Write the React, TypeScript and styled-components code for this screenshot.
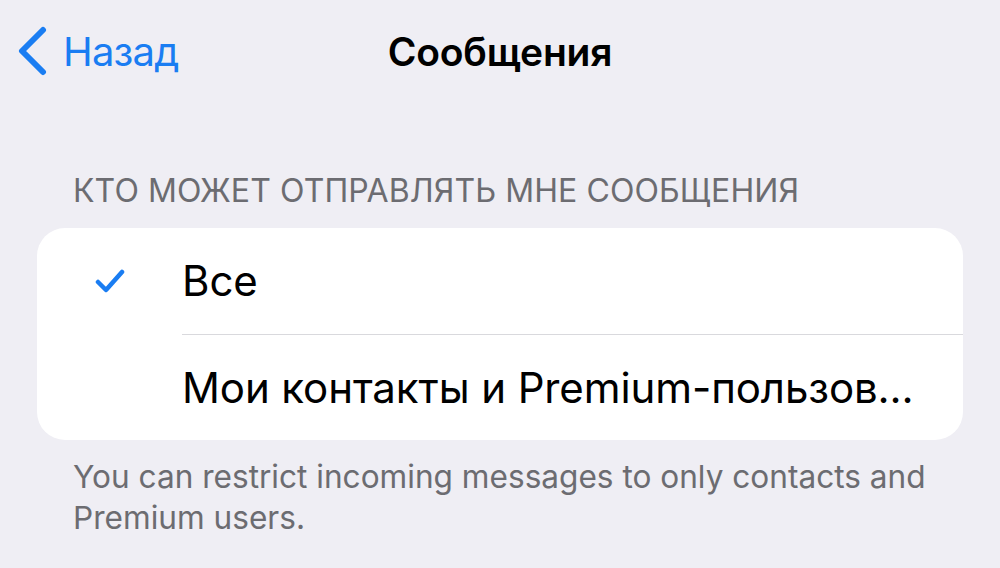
import styled, { createGlobalStyle } from 'styled-components'

const Global = createGlobalStyle`
  html, body {
    margin: 0;
    padding: 0;
    background: #efeef4;
  }
  body {
    font-family: Inter, "Noto Sans", "Liberation Sans", sans-serif;
    -webkit-font-smoothing: antialiased;
  }
`

const Screen = styled.div`
  width: 1000px;
  height: 568px;
  overflow: hidden;
  background: #efeef4;
  display: flex;
  flex-direction: column;
`

const NavBar = styled.header`
  height: 102px;
  display: grid;
  grid-template-columns: 1fr auto 1fr;
  align-items: center;
`

const BackButton = styled.button`
  justify-self: start;
  display: flex;
  align-items: center;
  gap: 16px;
  padding: 0 0 0 17px;
  border: none;
  background: none;
  color: #1a7df2;
  font-family: inherit;
  font-size: 40px;
  letter-spacing: -0.8px;
  cursor: pointer;

  svg {
    display: block;
  }
`

const Title = styled.h1`
  margin: 0;
  font-size: 39px;
  font-weight: 600;
  letter-spacing: -0.2px;
  color: #000;
`

const Section = styled.section`
  padding: 0 37px;
  margin-top: 69px;
`

const SectionHeader = styled.div`
  padding-left: 36px;
  height: 57px;
  font-size: 32px;
  color: #6c6c71;
  letter-spacing: 0.1px;
  text-transform: uppercase;
`

const Card = styled.div`
  background: #fff;
  border-radius: 28px;
  overflow: hidden;
`

const Row = styled.div`
  height: 106px;
  display: flex;
  align-items: center;
`

const CheckCell = styled.div`
  width: 145px;
  display: flex;
  justify-content: center;
`

const RowLabel = styled.div<{ $divider?: boolean }>`
  flex: 1;
  height: 100%;
  display: flex;
  align-items: center;
  font-size: 42px;
  letter-spacing: -0.1px;
  color: #000;
  border-bottom: ${({ $divider }) => ($divider ? '1.5px solid #d9d9dd' : 'none')};
  white-space: nowrap;
  overflow: hidden;
`

const Footer = styled.p`
  margin: 16px 0 0;
  padding: 0 36px;
  font-size: 31.6px;
  line-height: 41px;
  color: #6c6c71;
`

const Chevron = () => (
  <svg width="30" height="50" viewBox="0 0 30 50" fill="none">
    <path d="M26 4 L5 25 L26 46" stroke="#1a7df2" strokeWidth="6" strokeLinecap="round" strokeLinejoin="round" />
  </svg>
)

const Check = () => (
  <svg width="30" height="24" viewBox="0 0 30 24" fill="none">
    <path d="M3 13 L11 21 L27 3" stroke="#1a7df2" strokeWidth="4.5" strokeLinecap="round" strokeLinejoin="round" />
  </svg>
)

const options = [
  { label: 'Все', selected: true },
  { label: 'Мои контакты и Premium-пользов...', selected: false },
]

export default function App() {
  return (
    <Screen>
      <Global />
      <NavBar>
        <BackButton>
          <Chevron />
          Назад
        </BackButton>
        <Title>Сообщения</Title>
        <div />
      </NavBar>

      <Section>
        <SectionHeader>Кто может отправлять мне сообщения</SectionHeader>
        <Card>
          {options.map((o, i) => (
            <Row key={o.label}>
              <CheckCell>{o.selected && <Check />}</CheckCell>
              <RowLabel $divider={i < options.length - 1}>{o.label}</RowLabel>
            </Row>
          ))}
        </Card>
        <Footer>
          You can restrict incoming messages to only contacts and Premium users.
        </Footer>
      </Section>
    </Screen>
  )
}
